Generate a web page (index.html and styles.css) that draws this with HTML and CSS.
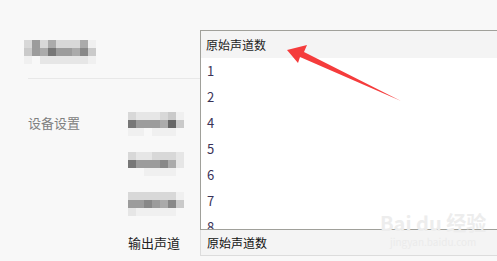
FILE: index.html
```html
<!DOCTYPE html>
<html lang="zh-CN">
<head>
    <meta charset="UTF-8">
    <title>设备设置</title>
    <link rel="stylesheet" href="styles.css">
</head>
<body>
    <div class="panel">
        <!-- blurred page title -->
        <div class="title-row">
            <div class="mosaic wide">
                <span class="g3"></span><span class="g6"></span><span class="g3"></span><span class="g5"></span><span class="g3"></span><span class="g3"></span><span class="g3"></span><span class="g5"></span><span class="g1"></span>
                <span class="g4"></span><span class="g6"></span><span class="g5"></span><span class="g8"></span><span class="g6"></span><span class="g6"></span><span class="g5"></span><span class="g7"></span><span class="g4"></span>
                <span class="g1"></span><span class="g0"></span><span class="g2"></span><span class="g2"></span><span class="g2"></span><span class="g2"></span><span class="g2"></span><span class="g2"></span><span class="g1"></span>
            </div>
        </div>

        <div class="divider"></div>

        <div class="section">
            <div class="section-label">设备设置</div>
            <div class="fields">
                <div class="blur-rows">
                    <div class="mosaic">
                        <span class="g3"></span><span class="g2"></span><span class="g2"></span><span class="g2"></span><span class="g3"></span><span class="g4"></span><span class="g1"></span>
                        <span class="g8"></span><span class="g6"></span><span class="g6"></span><span class="g6"></span><span class="g5"></span><span class="g9"></span><span class="g4"></span>
                        <span class="g1"></span><span class="g1"></span><span class="g0"></span><span class="g1"></span><span class="g1"></span><span class="g1"></span><span class="g0"></span>
                    </div>
                    <div class="mosaic">
                        <span class="g3"></span><span class="g2"></span><span class="g2"></span><span class="g3"></span><span class="g3"></span><span class="g3"></span><span class="g2"></span>
                        <span class="g8"></span><span class="g6"></span><span class="g6"></span><span class="g6"></span><span class="g7"></span><span class="g5"></span><span class="g2"></span>
                        <span class="g0"></span><span class="g0"></span><span class="g1"></span><span class="g1"></span><span class="g1"></span><span class="g1"></span><span class="g0"></span>
                    </div>
                    <div class="mosaic">
                        <span class="g3"></span><span class="g3"></span><span class="g3"></span><span class="g3"></span><span class="g3"></span><span class="g3"></span><span class="g1"></span>
                        <span class="g6"></span><span class="g6"></span><span class="g7"></span><span class="g6"></span><span class="g5"></span><span class="g7"></span><span class="g4"></span>
                        <span class="g2"></span><span class="g1"></span><span class="g1"></span><span class="g1"></span><span class="g1"></span><span class="g1"></span><span class="g0"></span>
                    </div>
                </div>

                <div class="output-row">
                    <div class="field-label">输出声道</div>
                    <div class="select-box">原始声道数</div>
                </div>
            </div>
        </div>
    </div>

    <!-- opened select list -->
    <div class="dropdown">
        <div class="dropdown-head">原始声道数</div>
        <ul class="dropdown-list">
            <li>1</li>
            <li>2</li>
            <li>4</li>
            <li>5</li>
            <li>6</li>
            <li>7</li>
            <li>8</li>
        </ul>
    </div>

    <svg class="arrow" width="497" height="261" viewBox="0 0 497 261">
        <polygon points="287,50 307,45 304,52 401,101 300,57 298,63" fill="#f53c3c"/>
    </svg>

    <div class="watermark">
        <div class="wm-logo">Bai du 经验</div>
        <div class="wm-url">jingyan.baidu.com</div>
    </div>
</body>
</html>
```

FILE: styles.css
```css
* {
    margin: 0;
    padding: 0;
    box-sizing: border-box;
}

body {
    background-color: #f8f8f8;
    font-family: "Noto Sans CJK SC", "Liberation Sans", sans-serif;
    font-size: 13px;
    color: #222;
    width: 497px;
    height: 261px;
    overflow: hidden;
    position: relative;
}

.title-row {
    padding: 40px 0 0 24px;
}

.mosaic {
    display: grid;
    grid-template-columns: repeat(7, 8px);
    grid-auto-rows: 8px;
}

.mosaic.wide {
    grid-template-columns: repeat(9, 8px);
}

.g0 { background-color: transparent; }
.g1 { background-color: #f0f0f0; }
.g2 { background-color: #e6e6e6; }
.g3 { background-color: #d8d8d8; }
.g4 { background-color: #cacaca; }
.g5 { background-color: #ababab; }
.g6 { background-color: #9c9c9c; }
.g7 { background-color: #888888; }
.g8 { background-color: #777777; }
.g9 { background-color: #666666; }

.divider {
    margin: 14px 0 0 28px;
    height: 1px;
    background-color: #e8e8e8;
}

.section {
    display: flex;
    margin-top: 33px;
    padding-left: 28px;
}

.section-label {
    width: 100px;
    height: 24px;
    line-height: 21px;
    color: #808080;
}

.fields {
    flex: 1;
}

.blur-rows {
    display: flex;
    flex-direction: column;
    gap: 16px;
}

.output-row {
    display: flex;
    align-items: center;
    margin-top: 13px;
}

.field-label {
    width: 72px;
}

.select-box {
    flex: 1;
    height: 27px;
    line-height: 25px;
    padding-left: 6px;
    font-size: 12px;
    color: #111;
    background-color: #f4f4f4;
    border: 1px solid #dcdcdc;
    border-right: none;
}

.dropdown {
    position: absolute;
    left: 200px;
    top: 30px;
    width: 310px;
    height: 200px;
    background: white;
    border: 1px solid #a0a09a;
    overflow: hidden;
    font-size: 12px;
}

.dropdown-head {
    height: 27px;
    line-height: 27px;
    padding-left: 5px;
    background-color: #f4f4f4;
    color: #222;
}

.dropdown-list {
    list-style: none;
}

.dropdown-list li {
    height: 26px;
    line-height: 26px;
    padding-left: 6px;
    font-size: 13px;
    color: #3a3358;
}

.arrow {
    position: absolute;
    left: 0;
    top: 0;
}

.watermark {
    position: absolute;
    left: 380px;
    top: 210px;
    text-align: center;
    color: #ededed;
}

.wm-logo {
    font-size: 20px;
    font-weight: bold;
    line-height: 26px;
}

.wm-url {
    font-size: 10px;
    line-height: 12px;
    color: #ebebeb;
}
```
